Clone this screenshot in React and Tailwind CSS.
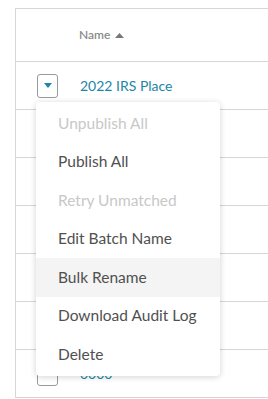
import React from "react";

const rows = ["2022 IRS Place", "", "", "", "", "", "0000"];
const items = [
  { label: "Unpublish All", disabled: true },
  { label: "Publish All" },
  { label: "Retry Unmatched", disabled: true },
  { label: "Edit Batch Name" },
  { label: "Bulk Rename", active: true },
  { label: "Download Audit Log" },
  { label: "Delete" },
];

function Caret() {
  return (
    <svg width="8" height="5" viewBox="0 0 8 5">
      <path d="M0 0 L8 0 L4 5 Z" fill="#1b86a6" />
    </svg>
  );
}

export default function App() {
  return (
    <div className="w-[268px] h-[399px] bg-white overflow-hidden relative" style={{ fontFamily: "Lato, 'Open Sans', sans-serif" }}>
      <div className="ml-[15px] mt-[8px] w-[300px] border-l border-t border-[#d6d6d6]">
        <div className="h-[53px] flex items-center pl-[63px] border-b border-[#d6d6d6]">
          <span className="text-[12px] font-semibold text-[#8a8a8a]">Name</span>
          <svg className="ml-[5px]" width="9" height="5" viewBox="0 0 9 5">
            <path d="M0 5 L9 5 L4.5 0 Z" fill="#777" />
          </svg>
        </div>
        {rows.map((r, i) => (
          <div key={i} className="h-[48px] flex items-center border-b border-[#d6d6d6]">
            <div className="ml-[21px] w-[21px] h-[24px] border border-[#9a9a9a] rounded-[3px] flex items-center justify-center">
              <Caret />
            </div>
            {r && <span className="ml-[22px] text-[14px] text-[#1b86a6]">{r}</span>}
          </div>
        ))}
      </div>
      <div className="absolute left-[36px] top-[102px] w-[184px] bg-white rounded-[4px] py-[2px] shadow-[0_1px_6px_rgba(0,0,0,0.18)]">
        {items.map((it, i) => (
          <div
            key={i}
            className={
              "h-[38.5px] flex items-center pl-[22px] text-[15.5px] " +
              (it.disabled ? "text-[#c8c8c8] " : "text-[#505050] ") +
              (it.active ? "bg-[#f4f4f4]" : "")
            }
          >
            {it.label}
          </div>
        ))}
      </div>
    </div>
  );
}
